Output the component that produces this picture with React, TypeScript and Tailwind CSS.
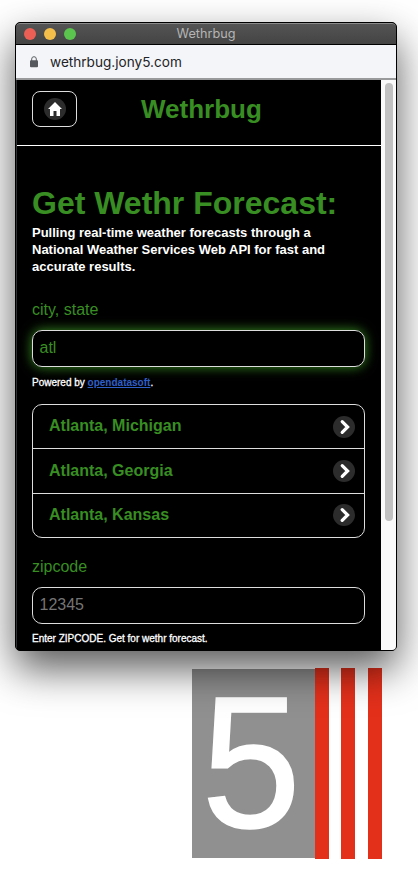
import React from "react";

const results = [
  { name: "Atlanta, Michigan", row: "h-[43px]", text: "-mt-0.5" },
  { name: "Atlanta, Georgia", row: "h-[45px] border-t border-[#ddd] pb-px", text: "mt-px" },
  { name: "Atlanta, Kansas", row: "h-[44px] border-t border-[#ddd] pb-px", text: "mt-0" },
];

function HomeIcon() {
  return (
    <svg width="22" height="22" viewBox="0 0 22 22" className="block">
      <circle cx="11" cy="11" r="11" fill="#2c2c2c" />
      <path d="M11 4 L4 11 H6 V18 H9.5 V13 H12.5 V18 H16 V11 H18 Z" fill="#fff" />
    </svg>
  );
}

function ChevronIcon() {
  return (
    <svg width="22" height="22" viewBox="0 0 22 22" className="block shrink-0">
      <circle cx="11" cy="11" r="11" fill="#2c2c2c" />
      <path d="M9.2 5.6 L14.6 11 L9.2 16.4" fill="none" stroke="#fff" strokeWidth="3.2" strokeLinecap="round" />
    </svg>
  );
}

function LockIcon() {
  return (
    <svg width="8" height="12" viewBox="0 0 8 12" className="block">
      <path d="M1.7 5.5 V3 A2.3 2.3 0 0 1 6.3 3 V5.5" fill="none" stroke="#5a5d62" strokeWidth="1" />
      <rect x="0" y="4.3" width="8" height="7" rx="1" fill="#55585d" />
    </svg>
  );
}

function Results() {
  return (
    <ul className="mt-[15px] h-[134px] overflow-hidden rounded-[10px] border border-[#ddd]">
      {results.map((r) => (
        <li key={r.name} className={"flex items-center justify-between pr-[9px] pl-4 " + r.row}>
          <span className={"text-base leading-5 font-bold whitespace-nowrap " + r.text}>{r.name}</span>
          <ChevronIcon />
        </li>
      ))}
    </ul>
  );
}

function Logo() {
  return (
    <div className="mt-[17px] ml-[192px] flex h-[191px] w-[190px]">
      <div className="my-px w-[123px] bg-[#909090]">
        <div className="ml-[7px] w-fit scale-x-[0.95] text-[188px] leading-[187px] text-white [-webkit-text-stroke:1.5px_white]">
          5
        </div>
      </div>
      <div className="w-[14px] bg-[#e3301b]" />
      <div className="ml-3 w-[14px] bg-[#e3301b]" />
      <div className="ml-[13px] w-[14px] bg-[#e3301b]" />
    </div>
  );
}

export default function App() {
  return (
    <div className="h-[894px] w-[418px] overflow-hidden bg-white pt-[22px] font-['Liberation_Sans',Arial,sans-serif]">
      <div className="relative z-10 ml-[15px] flex h-[629px] w-[382px] flex-col overflow-hidden rounded-[5px] border border-black bg-black shadow-[0_18px_40px_rgba(0,0,0,0.65)]">
        <div className="flex h-[22px] shrink-0 items-center rounded-t-[4px] border-t border-b border-t-[#8b8b8b] border-b-black bg-linear-to-b from-[#545454] to-[#444]">
          <div className="ml-2 flex w-[52px] shrink-0 gap-2">
            <i className="size-3 rounded-full bg-[#ec5f54]" />
            <i className="size-3 rounded-full bg-[#f4be4a]" />
            <i className="size-3 rounded-full bg-[#5bc44e]" />
          </div>
          <div className="mr-[60px] flex-1 text-center font-['Inter',sans-serif] text-[12.7px] leading-5 text-[#b4b4b4]">
            Wethrbug
          </div>
        </div>
        <div className="flex h-[35px] shrink-0 items-center border-b-2 border-[#999a9c] bg-[#f4f5f8] pl-[14px]">
          <LockIcon />
          <span className="ml-3 font-['Inter',sans-serif] text-[13.6px] leading-5 text-[#222326]">
            wethrbug.jony5.com
          </span>
        </div>
        <div className="flex min-h-0 flex-1">
          <div className="w-[365px] shrink-0 overflow-hidden border-l border-[#303336] text-[#388e22]">
            <header className="flex h-[66px] border-b border-white pl-[15px]">
              <button className="mt-[11px] flex h-9 w-[45px] items-center justify-center rounded-[8px] border border-[#ddd]">
                <HomeIcon />
              </button>
              <h1 className="mt-[13px] ml-[64px] text-[26px] leading-8 font-bold">Wethrbug</h1>
            </header>
            <main className="pt-[37px] pr-4 pl-[15px]">
              <h2 className="text-[32px] leading-10 font-bold whitespace-nowrap">Get Wethr Forecast:</h2>
              <p className="mt-px text-[13px] leading-[17px] font-bold whitespace-nowrap text-white">
                Pulling real-time weather forecasts through a<br />
                National Weather Services Web API for fast and<br />
                accurate results.
              </p>
              <label className="mt-[25px] block text-base leading-5">city, state</label>
              <div className="mt-[10px] h-[37px] rounded-[10px] border border-[#ddd] pl-[6.5px] text-base leading-[34px] shadow-[0_0_12px_#388e22]">
                atl
              </div>
              <p className="mt-[9px] text-[10px] leading-[13px] text-white [-webkit-text-stroke:0.3px]">
                Powered by <a className="font-bold text-[#2f5fc8] underline [-webkit-text-stroke:0px]">opendatasoft</a>.
              </p>
              <Results />
              <label className="mt-[19px] block text-base leading-5">zipcode</label>
              <div className="mt-[10px] h-[37px] rounded-[10px] border border-[#ddd] pl-[6.5px] text-base leading-[34px] text-[#757575]">
                12345
              </div>
              <p className="mt-[8px] text-[10px] leading-[13px] text-white [-webkit-text-stroke:0.3px]">
                Enter ZIPCODE. Get for wethr forecast.
              </p>
            </main>
          </div>
          <div className="flex-1 bg-[#fafafa] pt-[3px] pl-1">
            <div className="h-[438px] w-2 rounded-full bg-[#c1c1c1]" />
          </div>
        </div>
      </div>
      <Logo />
    </div>
  );
}
